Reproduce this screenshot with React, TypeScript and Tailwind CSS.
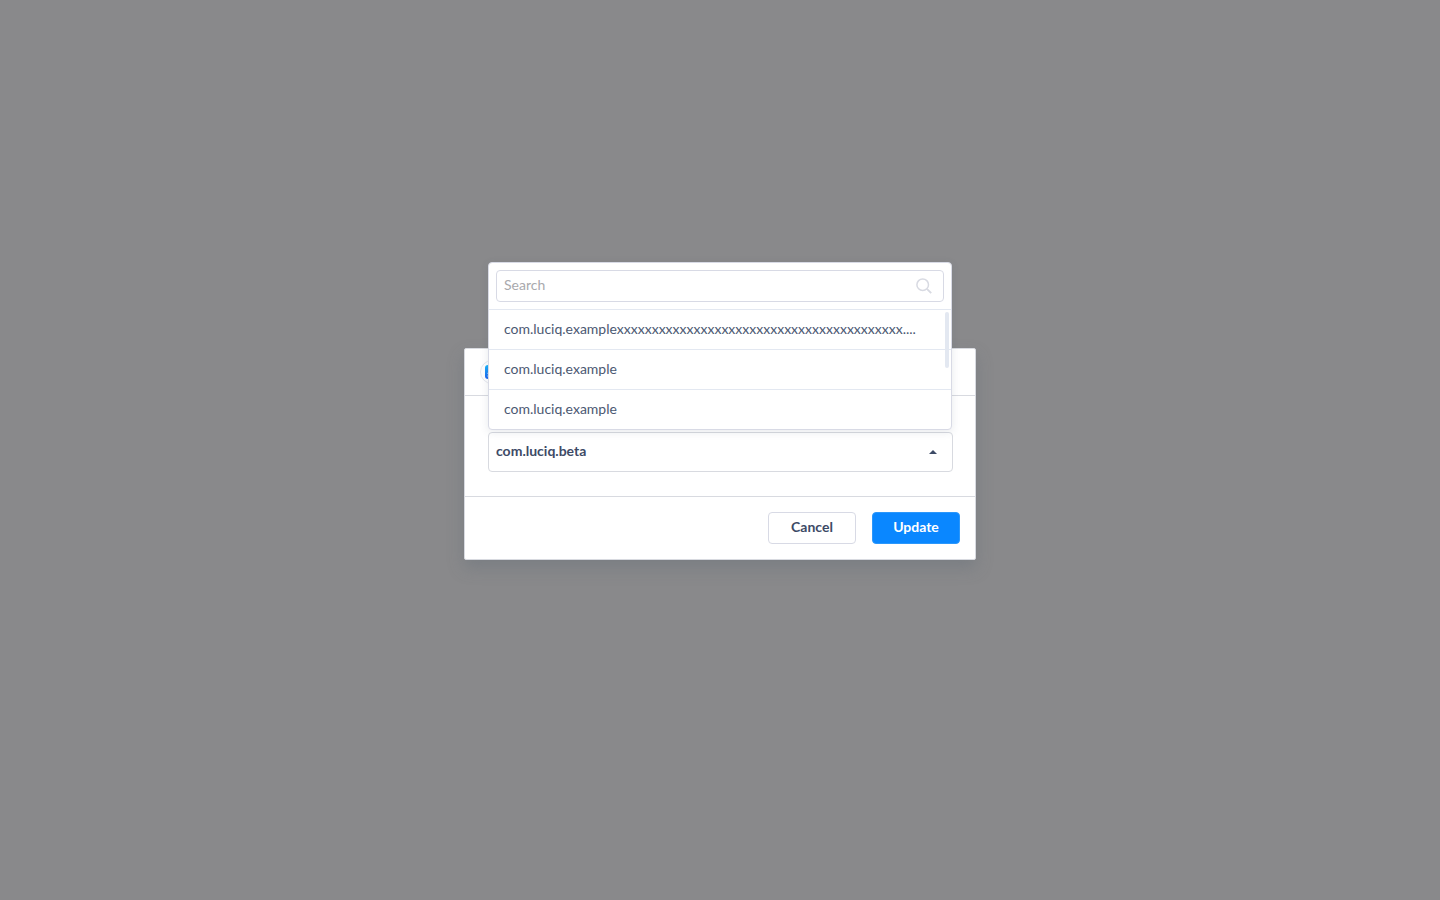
import { useState } from "react";

const bundles = [
  "com.luciq.examplexxxxxxxxxxxxxxxxxxxxxxxxxxxxxxxxxxxxxxxxx....",
  "com.luciq.example",
  "com.luciq.example",
];

function AppIcon() {
  return (
    <span className="flex size-6 items-center justify-center rounded-full border border-[#e6e8ee] bg-white">
      <svg viewBox="0 0 14 14" className="size-[14px]" aria-hidden="true">
        <defs>
          <linearGradient id="appIconFill" x1="0" y1="0" x2="0" y2="1">
            <stop offset="0" stopColor="#19b4fb" />
            <stop offset="1" stopColor="#1d62f0" />
          </linearGradient>
        </defs>
        <rect width="14" height="14" rx="3" fill="url(#appIconFill)" />
        <path
          d="M7.6 2.8 4.2 9M6.4 2.8 9.8 9M2.9 8.3h8.2M3.6 10l-.6 1M10.4 10l.6 1"
          stroke="#fff"
          strokeWidth="1"
          strokeLinecap="round"
          fill="none"
        />
      </svg>
    </span>
  );
}

function BundleMenu({ onPick }: { onPick: (index: number) => void }) {
  const [query, setQuery] = useState("");
  const shown = bundles
    .map((name, index) => ({ name, index }))
    .filter((b) => b.name.includes(query));
  return (
    <div className="absolute inset-x-0 bottom-full z-10 mr-px mb-0.5 overflow-hidden rounded border border-[#d8dae5] bg-white shadow-[0_2px_8px_rgba(60,70,100,0.12)]">
      <div className="p-[7px]">
        <div className="flex h-8 items-center rounded border border-[#d8dae5] pr-[11px] pl-[7px]">
          <input
            type="text"
            aria-label="Search"
            value={query}
            onChange={(e) => setQuery(e.target.value)}
            placeholder="Search"
            className="min-w-0 flex-1 bg-transparent pb-0.5 text-sm text-[#3d4a66] outline-none placeholder:text-[#a9a9ad]"
          />
          <svg viewBox="0 0 16 16" className="size-4" fill="none" stroke="#d8dae2" aria-hidden="true">
            <circle cx="6.7" cy="6.7" r="5.8" strokeWidth="1.5" />
            <path d="M10.9 10.9 15.2 15.2" strokeWidth="1.9" />
          </svg>
        </div>
      </div>
      <div className="relative">
        <ul>
          {shown.map((b) => (
            <li key={b.index} className="border-t border-[#e3e8f1]">
              <button
                type="button"
                onClick={() => onPick(b.index)}
                className="block h-[39px] w-full truncate px-[15px] pb-0.5 text-left text-sm text-[#4b5872]"
              >
                {b.name}
              </button>
            </li>
          ))}
        </ul>
        <span className="absolute top-[3px] right-0.5 h-14 w-1 rounded-full bg-[#e3e8f1]" />
      </div>
    </div>
  );
}

export default function App() {
  const [value, setValue] = useState("beta");
  return (
    <div className="flex min-h-screen items-center justify-center bg-[#89898b] pt-2 font-['Lato','Liberation_Sans',sans-serif] text-[#3d4a66]">
      <form
        role="dialog"
        aria-label="Update"
        onSubmit={(e) => e.preventDefault()}
        className="w-full max-w-lg rounded-[2px] border border-[#d8dae0] bg-white shadow-[0_8px_16px_rgba(95,107,118,0.35)]"
      >
        <header className="flex h-[47px] items-center border-b border-[#d8dae0] px-[15px]">
          <AppIcon />
        </header>
        <div className="px-[23px] pt-9 pb-6">
          <div className="relative -mr-px">
            <BundleMenu onPick={(i) => setValue(String(i))} />
            <select
              aria-label="Bundle"
              value={value}
              onChange={(e) => setValue(e.target.value)}
              className="block h-10 w-full appearance-none rounded border border-[#d8dae0] bg-white pr-8 pb-0.5 pl-[7px] text-sm font-bold text-[#3d4a66] outline-none"
            >
              <option value="beta">com.luciq.beta</option>
              {bundles.map((name, i) => (
                <option key={i} value={i}>
                  {name}
                </option>
              ))}
            </select>
            <svg
              viewBox="0 0 8 4"
              className="pointer-events-none absolute top-[18px] right-4 h-1 w-2"
              aria-hidden="true"
            >
              <path d="M0 4 4 0l4 4z" fill="#3d4a66" />
            </svg>
          </div>
        </div>
        <footer className="flex justify-end gap-4 border-t border-[#d8dae0] p-[15px]">
          <button
            type="button"
            className="h-8 w-[88px] rounded border border-[#d8dae5] bg-white pb-0.5 text-sm font-bold"
          >
            Cancel
          </button>
          <button
            type="submit"
            className="h-8 w-[88px] rounded border border-[#2b97fb] bg-[#0a87ff] pb-0.5 text-sm font-bold text-white"
          >
            Update
          </button>
        </footer>
      </form>
    </div>
  );
}
